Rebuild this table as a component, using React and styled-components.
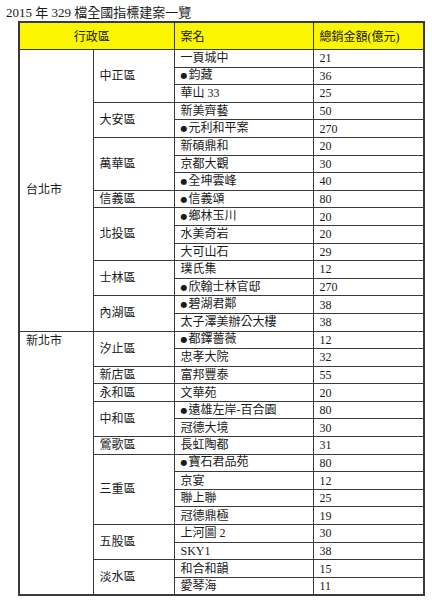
import React from 'react';
import styled, { createGlobalStyle } from 'styled-components';

const GlobalStyle = createGlobalStyle`
  html, body {
    margin: 0;
    padding: 0;
    background: #fff;
  }
  body {
    font-family: "Liberation Serif", "Noto Sans CJK TC", serif;
    color: #1a1a1a;
  }
`;

const Page = styled.div`
  width: 432px;
  height: 600px;
  overflow: hidden;
  background: #fff;
`;

const Title = styled.div`
  font-size: 13px;
  line-height: 16px;
  padding: 5px 0 0 6px;
  height: 16px;
  white-space: nowrap;
`;

const Table = styled.table`
  margin-left: 18px;
  width: 405px;
  border-collapse: collapse;
  table-layout: fixed;
  border: 2px solid #3a3a3a;
  font-size: 12px;
`;

const Head = styled.th`
  height: 26px;
  background: #fbf500;
  border: 1px solid #3a3a3a;
  font-weight: normal;
  text-align: ${(p) => (p.$center ? 'center' : 'left')};
  padding: 0 ${(p) => (p.$center ? '16px' : '0')} 0 6px;
`;

const Cell = styled.td`
  height: 16.6px;
  line-height: 14px;
  border: 1px solid #3a3a3a;
  padding: 0 0 0 6px;
  vertical-align: ${(p) => p.$valign || 'middle'};
  white-space: nowrap;
  overflow: hidden;
`;

const CityCell = styled(Cell)`
  padding-top: ${(p) => (p.$valign === 'top' ? '2px' : '0')};
`;

const Bullet = styled.span`
  font-family: "DejaVu Sans", sans-serif;
  font-size: 8px;
  vertical-align: 1px;
  margin-right: 1px;
`;

const regions = [
  {
    city: '台北市',
    valign: 'middle',
    districts: [
      { name: '中正區', items: [['一頁城中', '21'], ['*鈞藏', '36'], ['華山 33', '25']] },
      { name: '大安區', items: [['新美齊藝', '50'], ['*元利和平案', '270']] },
      { name: '萬華區', items: [['新碩鼎和', '20'], ['京都大觀', '30'], ['*全坤雲峰', '40']] },
      { name: '信義區', items: [['*信義頌', '80']] },
      { name: '北投區', items: [['*鄉林玉川', '20'], ['水美奇岩', '20'], ['大可山石', '29']] },
      { name: '士林區', items: [['璞氏集', '12'], ['*欣翰士林官邸', '270']] },
      { name: '內湖區', items: [['*碧湖君鄰', '38'], ['太子澤美辦公大樓', '38']] },
    ],
  },
  {
    city: '新北市',
    valign: 'top',
    districts: [
      { name: '汐止區', items: [['*都鐸薔薇', '12'], ['忠孝大院', '32']] },
      { name: '新店區', items: [['富邦豐泰', '55']] },
      { name: '永和區', items: [['文華苑', '20']] },
      { name: '中和區', items: [['*遠雄左岸-百合園', '80'], ['冠德大境', '30']] },
      { name: '鶯歌區', items: [['長虹陶都', '31']] },
      {
        name: '三重區',
        items: [['*寶石君品苑', '80'], ['京宴', '12'], ['聯上聯', '25'], ['冠德鼎極', '19']],
      },
      { name: '五股區', items: [['上河圖 2', '30'], ['SKY1', '38']] },
      { name: '淡水區', items: [['和合和韻', '15'], ['愛琴海', '11']] },
    ],
  },
];

function ProjectName({ text }) {
  if (text.startsWith('*')) {
    return (
      <>
        <Bullet>●</Bullet>
        {text.slice(1)}
      </>
    );
  }
  return text;
}

function RegionRows({ region }) {
  const total = region.districts.reduce((n, d) => n + d.items.length, 0);
  const rows = [];
  region.districts.forEach((d, di) => {
    d.items.forEach(([name, amount], ii) => {
      rows.push(
        <tr key={`${d.name}-${ii}`}>
          {di === 0 && ii === 0 && (
            <CityCell rowSpan={total} $valign={region.valign}>
              {region.city}
            </CityCell>
          )}
          {ii === 0 && <Cell rowSpan={d.items.length}>{d.name}</Cell>}
          <Cell>
            <ProjectName text={name} />
          </Cell>
          <Cell>{amount}</Cell>
        </tr>
      );
    });
  });
  return rows;
}

export default function App() {
  return (
    <Page>
      <GlobalStyle />
      <Title>2015 年 329 檔全國指標建案一覽</Title>
      <Table>
        <colgroup>
          <col style={{ width: 74 }} />
          <col style={{ width: 81 }} />
          <col style={{ width: 139 }} />
          <col style={{ width: 111 }} />
        </colgroup>
        <thead>
          <tr>
            <Head colSpan={2} $center>
              行政區
            </Head>
            <Head>案名</Head>
            <Head>總銷金額(億元)</Head>
          </tr>
        </thead>
        <tbody>
          {regions.map((r) => (
            <RegionRows key={r.city} region={r} />
          ))}
        </tbody>
      </Table>
    </Page>
  );
}
